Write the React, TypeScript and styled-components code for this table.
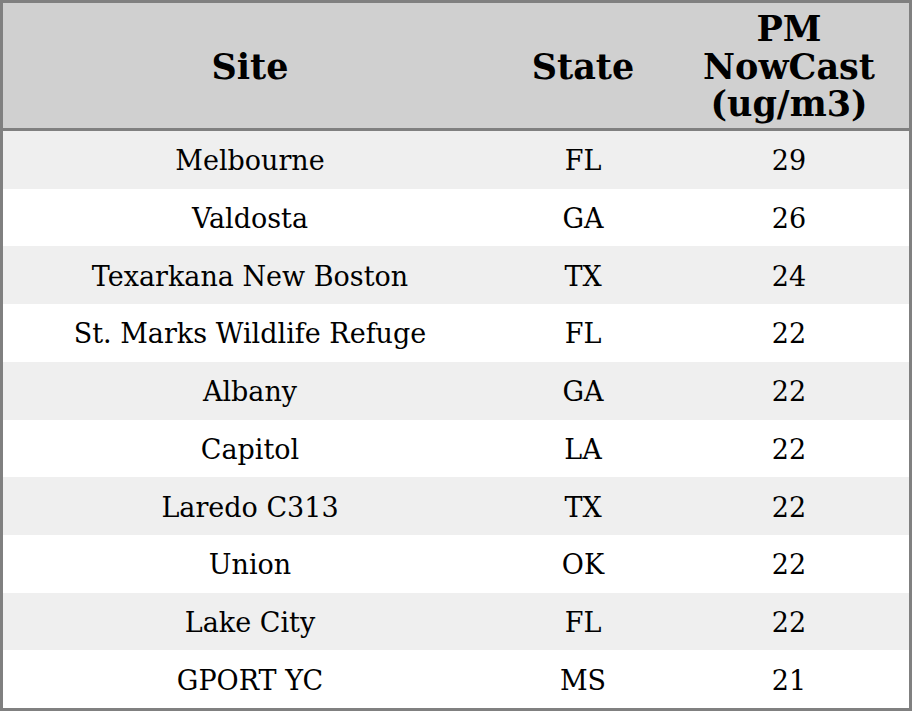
import React from "react";
import styled, { createGlobalStyle } from "styled-components";

const Global = createGlobalStyle`
  html, body { margin: 0; padding: 0; background: #ffffff; }
  #root { width: 912px; height: 711px; }
`;

const Table = styled.div`
  box-sizing: border-box;
  width: 912px;
  height: 711px;
  border: 3px solid #808080;
  display: grid;
  grid-template-columns: 494px 172px 240px;
  grid-template-rows: 128px repeat(10, 1fr);
  font-family: "DejaVu Serif", serif;
  color: #000;
`;

const HeadCell = styled.div`
  background: #d0d0d0;
  border-bottom: 3px solid #808080;
  display: flex;
  align-items: center;
  justify-content: center;
  text-align: center;
  font-weight: bold;
  font-size: 35px;
  line-height: 37.5px;
  padding-top: 2px;
`;

const Cell = styled.div<{ $odd: boolean }>`
  background: ${(p) => (p.$odd ? "#efefef" : "#ffffff")};
  display: flex;
  align-items: center;
  justify-content: center;
  font-size: 27px;
  white-space: nowrap;
  padding-top: 2px;
`;

const rows: [string, string, string][] = [
  ["Melbourne", "FL", "29"],
  ["Valdosta", "GA", "26"],
  ["Texarkana New Boston", "TX", "24"],
  ["St. Marks Wildlife Refuge", "FL", "22"],
  ["Albany", "GA", "22"],
  ["Capitol", "LA", "22"],
  ["Laredo C313", "TX", "22"],
  ["Union", "OK", "22"],
  ["Lake City", "FL", "22"],
  ["GPORT YC", "MS", "21"],
];

export default function App() {
  return (
    <>
      <Global />
      <Table>
        <HeadCell>Site</HeadCell>
        <HeadCell>State</HeadCell>
        <HeadCell>
          PM
          <br />
          NowCast
          <br />
          (ug/m3)
        </HeadCell>
        {rows.map((r, i) =>
          r.map((v, j) => (
            <Cell key={`${i}-${j}`} $odd={i % 2 === 0}>
              {v}
            </Cell>
          ))
        )}
      </Table>
    </>
  );
}
